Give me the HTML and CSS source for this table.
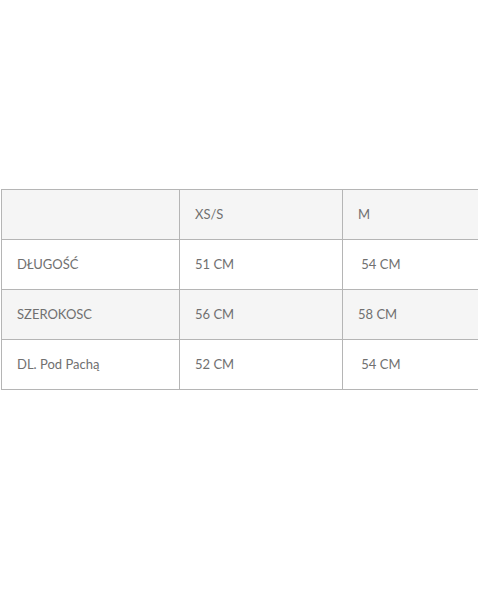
FILE: index.html
```html
<!DOCTYPE html>
<html lang="pl">
<head>
<meta charset="utf-8">
<link rel="stylesheet" href="styles.css">
</head>
<body>
<div class="page">
  <table class="sizes">
    <colgroup>
      <col class="c1"><col class="c2"><col class="c3">
    </colgroup>
    <tr class="shade">
      <td></td>
      <td>XS/S</td>
      <td>M</td>
    </tr>
    <tr>
      <td>DŁUGOŚĆ</td>
      <td>51 CM</td>
      <td>&nbsp;54 CM</td>
    </tr>
    <tr class="shade">
      <td>SZEROKOSC</td>
      <td>56 CM</td>
      <td>58 CM</td>
    </tr>
    <tr>
      <td>DL. Pod Pachą</td>
      <td>52 CM</td>
      <td>&nbsp;54 CM</td>
    </tr>
  </table>
</div>
</body>
</html>
```
FILE: styles.css
```css
html, body {
  margin: 0;
  padding: 0;
  background: #fff;
}
.page {
  padding-top: 189px;
  padding-left: 1px;
  overflow: hidden;
}
.sizes {
  border-collapse: collapse;
  table-layout: fixed;
  width: 560px;
  font-family: Lato, "Liberation Sans", sans-serif;
  font-size: 13px;
  color: #707070;
}
.c1 { width: 178px; }
.c2 { width: 163px; }
.c3 { width: 219px; }
.sizes td {
  height: 50px;
  padding: 0 0 2px 15px;
  border: 1px solid #b5b5b5;
  box-sizing: border-box;
  vertical-align: middle;
  white-space: nowrap;
}
.sizes tr.shade td {
  background: #f5f5f5;
}
```
